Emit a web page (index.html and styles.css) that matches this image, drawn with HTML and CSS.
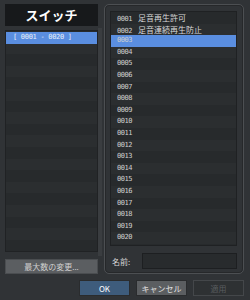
FILE: index.html
```html
<!DOCTYPE html>
<html>
<head>
	<title>スイッチ</title>
	<meta charset="utf-8">
	<link rel="stylesheet" href="styles.css">
</head>
<body>
<div id="dialog">
	<div class="top">
		<!-- 左側 -->
		<div class="leftCol">
			<div class="title">スイッチ</div>
			<div class="groupList">
				<div class="row active">[ 0001 - 0020 ]</div>
			</div>
			<button class="maxBtn">最大数の変更...</button>
		</div>
		<div class="sep"></div>
		<!-- 右側 -->
		<div class="rightPanel">
			<div class="itemList">
				<div class="row"><span class="num">0001</span><span class="jp">足音再生許可</span></div>
				<div class="row"><span class="num">0002</span><span class="jp">足音連続再生防止</span></div>
				<div class="row active"><span class="num">0003</span></div>
				<div class="row"><span class="num">0004</span></div>
				<div class="row"><span class="num">0005</span></div>
				<div class="row"><span class="num">0006</span></div>
				<div class="row"><span class="num">0007</span></div>
				<div class="row"><span class="num">0008</span></div>
				<div class="row"><span class="num">0009</span></div>
				<div class="row"><span class="num">0010</span></div>
				<div class="row"><span class="num">0011</span></div>
				<div class="row"><span class="num">0012</span></div>
				<div class="row"><span class="num">0013</span></div>
				<div class="row"><span class="num">0014</span></div>
				<div class="row"><span class="num">0015</span></div>
				<div class="row"><span class="num">0016</span></div>
				<div class="row"><span class="num">0017</span></div>
				<div class="row"><span class="num">0018</span></div>
				<div class="row"><span class="num">0019</span></div>
				<div class="row"><span class="num">0020</span></div>
			</div>
			<div class="nameRow">
				<span>名前:</span>
				<div class="nameInput"></div>
			</div>
		</div>
	</div>
	<!-- ボタン -->
	<div class="buttons">
		<button class="ok">OK</button>
		<button class="cancel">キャンセル</button>
		<button class="apply">適用</button>
	</div>
</div>
</body>
</html>
```

FILE: styles.css
```css
html,body{
	padding: 0;
	margin: 0;
	height: 100%;
}

body{
	background-color: #303336;
	font-family: "DejaVu Sans Mono", "Noto Sans CJK JP", monospace;
	font-size: 7px;
	color: #d8d8d8;
}

#dialog{
	width: 250px;
	height: 300px;
	box-sizing: border-box;
	padding: 4px 6px 0 5px;
}

.top{
	display: flex;
	height: 270px;
}

.leftCol{
	width: 93px;
	display: flex;
	flex-direction: column;
}
.title{
	height: 22px;
	background-color: #17191b;
	color: #fff;
	font-family: "Noto Sans CJK JP", sans-serif;
	font-weight: bold;
	font-size: 13px;
	line-height: 22px;
	text-align: center;
}
.groupList{
	margin-top: 4px;
	height: 223px;
	background: repeating-linear-gradient(#272a2c 0, #272a2c 11.6px, #2b2e30 11.6px, #2b2e30 23.2px);
	border: 1px solid #202224;
	padding-top: 1px;
}
.groupList .row{
	padding-left: 7px;
	letter-spacing: -0.3px;
}
.row{
	height: 11.6px;
	line-height: 11.6px;
	white-space: nowrap;
	overflow: hidden;
}
.row.active{
	background-color: #5a8ee0;
	color: #e8eef8;
}
.maxBtn{
	margin-top: 7px;
	height: 15px;
	padding: 0;
	border: 1px solid #4a4d50;
	background-color: #5b5e61;
	color: #d0d0d0;
	font-family: "Noto Sans CJK JP", sans-serif;
	font-size: 8px;
}

.sep{
	width: 4px;
	margin-top: 24px;
	margin-bottom: 18px;
	background-color: #3a3d40;
	margin-right: 2px;
}

.rightPanel{
	flex: 1;
	border: 1px solid #4c4f52;
	border-radius: 5px;
	box-shadow: inset 0 0 0 1px #26282a;
	padding: 6px 6px 0 5px;
	display: flex;
	flex-direction: column;
}
.itemList{
	height: 233px;
	background: repeating-linear-gradient(#272a2c 0, #272a2c 11.6px, #2b2e30 11.6px, #2b2e30 23.2px);
	border: 1px solid #1f2123;
}
.itemList .row{
	padding-left: 6px;
}
.num{
	display: inline-block;
	width: 21px;
	letter-spacing: -0.5px;
	color: #cfcfcf;
}
.jp{
	font-family: "Noto Sans CJK JP", sans-serif;
	font-size: 8px;
	color: #d8d8d8;
}
.nameRow{
	margin-top: 7px;
	display: flex;
	align-items: center;
	font-family: "Noto Sans CJK JP", sans-serif;
	font-size: 8px;
}
.nameRow span{
	width: 30px;
	padding-left: 2px;
}
.nameInput{
	flex: 1;
	height: 14px;
	background-color: #282b2d;
	border: 1px solid #1d1f21;
}

.buttons{
	display: flex;
	justify-content: flex-end;
	gap: 6px;
	margin-top: 6px;
}
.buttons button{
	width: 51px;
	height: 16px;
	padding: 0;
	font-family: "Noto Sans CJK JP", sans-serif;
	font-size: 8px;
	border: 1px solid #2a2c2e;
}
.ok{
	background-color: #3e5c7c;
	color: #fff;
}
.cancel{
	background-color: #5b5e61;
	color: #e0e0e0;
}
.apply{
	background-color: #2e3133;
	color: #5a5d60;
	border-color: #44474a !important;
}
```
